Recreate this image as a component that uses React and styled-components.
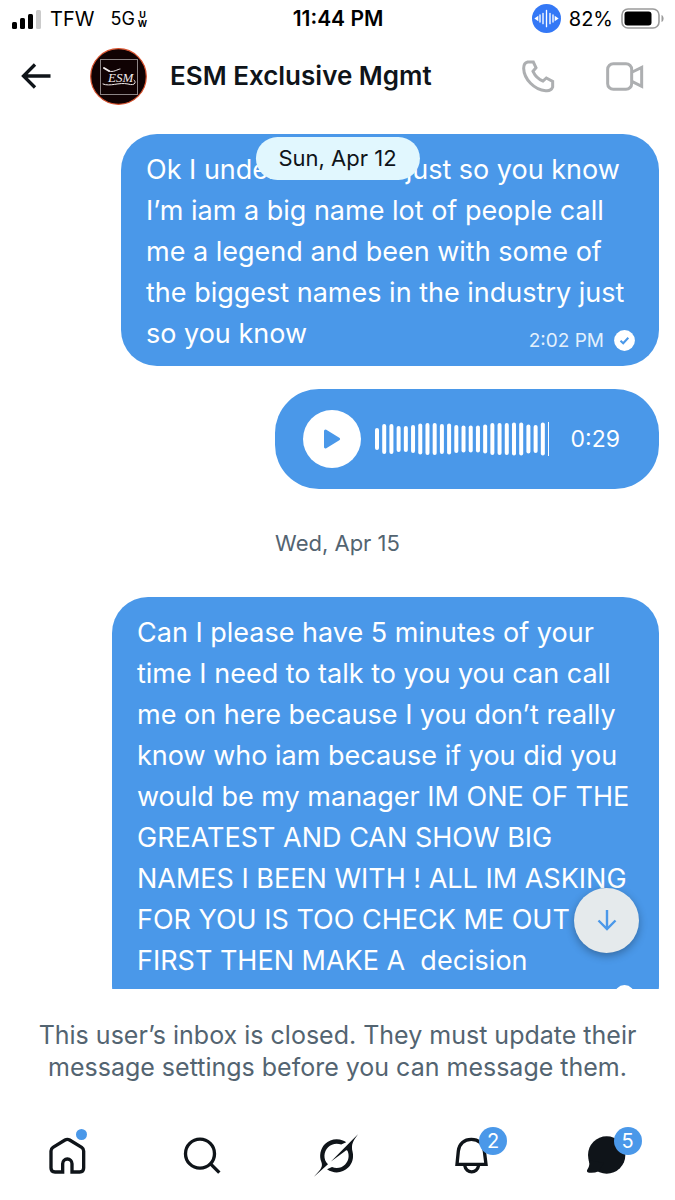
import React from 'react';
import styled, { createGlobalStyle } from 'styled-components';


const GlobalStyle = createGlobalStyle`
  * {
    box-sizing: border-box;
  }

  body {
    margin: 0;
    background-color: #fff;
    color: #0f1419;
    font-family: Inter, "Liberation Sans", sans-serif;
  }

  svg {
    display: block;
    flex-shrink: 0;
  }

  button {
    padding: 0;
    border: none;
    background: none;
    font: inherit;
    color: inherit;
    cursor: pointer;
  }
`;

const Screen = styled.div`
  display: flex;
  flex-direction: column;
  height: 100vh;
  overflow: hidden;
`;

const StatusBar = styled.div`
  display: grid;
  grid-template-columns: 1fr auto 1fr;
  align-items: center;
  height: 37px;
  padding: 0 11px 0 12px;
  color: #000;
  font-size: 20px;
  line-height: 24px;
`;

const StatusGroup = styled.div`
  display: flex;
  align-items: center;
  justify-content: ${(p) => (p.$end ? 'flex-end' : 'flex-start')};
  gap: 8px;
`;

const Clock = styled.time`
  font-size: 21px;
  font-weight: 600;
`;

const Network = styled.span`
  display: flex;
  align-items: center;
  gap: 3px;
  margin-left: 8px;
  font-size: 18px;
`;

const NetworkBand = styled.span`
  display: flex;
  flex-direction: column;
  font-size: 9px;
  font-weight: 700;
  line-height: 9px;
  text-align: center;
`;

const Header = styled.header`
  display: flex;
  align-items: center;
  height: 78px;
  padding: 0 31px 0 21px;
`;

const Avatar = styled.svg`
  margin: 0 23px 0 39px;
`;

const Title = styled.h1`
  flex: 1;
  margin: 0;
  font-size: 26px;
  font-weight: 600;
  line-height: 32px;
  white-space: nowrap;
`;

const Calls = styled.div`
  display: flex;
  align-items: center;
  gap: 50px;
  color: #adafb1;
`;

const ThreadArea = styled.main`
  position: relative;
  flex: 1;
  min-height: 0;
`;

const Thread = styled.div`
  display: flex;
  flex-direction: column;
  align-items: flex-end;
  gap: 23px;
  height: 100%;
  padding: 19px 16px 0;
  overflow: hidden;
`;

const DatePill = styled.div`
  position: absolute;
  top: 22px;
  left: 50%;
  padding: 0 23px;
  border-radius: 22px;
  transform: translateX(-50%);
  background-color: #e1f7fe;
  font-size: 22px;
  line-height: 43px;
  white-space: nowrap;
`;

const DateDivider = styled.div`
  align-self: center;
  flex-shrink: 0;
  padding: 16px 0;
  color: #536471;
  font-size: 22px;
  line-height: 30px;
`;

const Bubble = styled.article`
  display: flex;
  flex-direction: column;
  flex-shrink: 0;
  width: ${(p) => p.$width}px;
  max-width: 100%;
  padding: 15px 24px 15px 25px;
  border-radius: 36px;
  background-color: #4a98e9;
  color: #fff;
`;

const BubbleText = styled.p`
  margin: 0;
  font-size: 27px;
  line-height: 41px;
  white-space: pre-wrap;
`;

const Meta = styled.div`
  display: flex;
  align-items: center;
  align-self: flex-end;
  gap: 10px;
  margin-top: ${(p) => (p.$tucked ? '-24px' : '4px')};
  font-size: 19px;
  line-height: 20px;
  color: #e3f0fc;
`;

const VoiceBubble = styled.article`
  display: flex;
  align-items: center;
  flex-shrink: 0;
  height: 100px;
  padding: 0 39px 0 28px;
  border-radius: 44px;
  background-color: #4a98e9;
  color: #fff;
  font-size: 23px;
`;

const PlayButton = styled.button`
  display: grid;
  place-items: center;
  width: 58px;
  height: 58px;
  margin-right: 14px;
  border-radius: 50%;
  background-color: #fff;
`;

const Duration = styled.span`
  margin-left: 22px;
`;

const JumpButton = styled.button`
  position: absolute;
  right: 36px;
  bottom: 36px;
  display: grid;
  place-items: center;
  width: 65px;
  height: 65px;
  border-radius: 50%;
  background-color: #e5eaec;
  box-shadow: 0 3px 8px rgba(0, 0, 0, 0.3);
`;

const Notice = styled.p`
  margin: 0;
  padding: 30px 24px 27px;
  color: #536471;
  font-size: 25px;
  line-height: 32px;
  text-align: center;
`;

const Nav = styled.nav`
  display: grid;
  grid-template-columns: repeat(5, 1fr);
  place-items: center;
  height: 90px;
  padding-right: 2px;
`;

const NavLink = styled.a`
  position: relative;
  color: #0f1419;
  text-decoration: none;
`;

const Dot = styled.span`
  position: absolute;
  top: -4px;
  right: 2px;
  width: 11px;
  height: 11px;
  border-radius: 50%;
  background-color: #4a98e9;
`;

const Badge = styled.span`
  position: absolute;
  top: -6px;
  right: -14px;
  width: 28px;
  height: 28px;
  border-radius: 50%;
  background-color: #4a98e9;
  color: #fff;
  font-size: 20px;
  line-height: 28px;
  text-align: center;
`;

const levels = [22, 30, 30, 26, 26, 28, 31, 32, 32, 30, 31, 28, 27, 27, 27, 29, 32, 32, 32, 33, 33, 29, 28, 33];

const firstMessage = `Ok I understand but just so you know
I’m iam a big name lot of people call
me a legend and been with some of
the biggest names in the industry just
so you know`;

const secondMessage = `Can I please have 5 minutes of your
time I need to talk to you you can call
me on here because I you don’t really
know who iam because if you did you
would be my manager IM ONE OF THE
GREATEST AND CAN SHOW BIG
NAMES I BEEN WITH ! ALL IM ASKING
FOR YOU IS TOO CHECK ME OUT
FIRST THEN MAKE A  decision`;

const SignalIcon = () => (
  <svg width="30" height="20" viewBox="0 0 30 20">
    <rect x="0" y="13" width="5" height="7" rx="1.5" />
    <rect x="8" y="9" width="5" height="11" rx="1.5" />
    <rect x="16" y="5" width="5" height="15" rx="1.5" />
    <rect x="24" y="1" width="5" height="19" rx="1.5" fill="#cbcbcb" />
  </svg>
);

const VoiceIcon = () => (
  <svg width="29" height="29" viewBox="0 0 87 87">
    <circle cx="43.5" cy="43.5" r="43.5" fill="#3478f6" />
    <g stroke="#fff" strokeWidth="4" strokeLinecap="round">
      <path d="M24 33V54M33 28V59M43.5 19V68M54 28V59M63 33V54" />
    </g>
    <path d="M19 35V52L7 43.5ZM68 35V52L80 43.5Z" fill="#fff" />
  </svg>
);

const BatteryIcon = () => (
  <svg width="43" height="21" viewBox="0 0 43 21">
    <rect x="1" y="1" width="37" height="19" rx="6" fill="none" stroke="#9b9b9b" strokeWidth="1.6" />
    <rect x="3.5" y="3.5" width="27" height="14" rx="3" />
    <path d="M40.5 7C43.3 8 43.3 13 40.5 14Z" fill="#9b9b9b" />
  </svg>
);

const AvatarImage = () => (
  <Avatar width="57" height="57" viewBox="0 0 57 57" role="img" aria-label="ESM Exclusive Mgmt">
    <circle cx="28.5" cy="28.5" r="27.8" fill="#100203" stroke="#d9532f" strokeWidth="1.2" />
    <rect x="10.500" y="11.500" width="37" height="35" fill="none" stroke="#8c8485" strokeWidth="1" />
    <g fill="none" stroke="#f3eded" strokeLinecap="round">
      <path d="M14 20L19 23" strokeWidth="2" />
      <path d="M19 23C23 25 28 21 30 21M13 36C20 39 29 34 38 36C44 38 47 35 44 32" strokeWidth="1" />
    </g>
    <text x="18" y="34" fill="#f3eded" fontFamily="Liberation Serif, serif" fontStyle="italic" fontSize="13">ESM</text>
  </Avatar>
);

const Check = () => (
  <svg width="21" height="21" viewBox="0 0 21 21">
    <circle cx="10.5" cy="10.5" r="10.4" fill="#fff" />
    <path d="M6.500 10.800L9.200 13.300L14.300 7.800" fill="none" stroke="#4a98e9" strokeWidth="2" />
  </svg>
);

const Waveform = () => (
  <svg width="174" height="36" viewBox="0 0 174 36" fill="#fff">
    {levels.map((h, i) => (
      <rect key={i} x={i * 7.21} y={18 - h / 2} width="4" height={h} rx="2" />
    ))}
    <rect x="173" y="1" width="1" height="34" />
  </svg>
);

const App = () => {
    return (
        <Screen>
            <GlobalStyle />
            <StatusBar>
                <StatusGroup>
                    <SignalIcon />
                    <span>TFW</span>
                    <Network>
                        5G
                        <NetworkBand>
                            <span>U</span>
                            <span>W</span>
                        </NetworkBand>
                    </Network>
                </StatusGroup>
                <Clock>11:44 PM</Clock>
                <StatusGroup $end>
                    <VoiceIcon />
                    <span>82%</span>
                    <BatteryIcon />
                </StatusGroup>
            </StatusBar>

            <Header>
                <button aria-label="Back">
                    <svg width="30" height="26" viewBox="0 0 30 26" fill="none" stroke="#0f1419" strokeWidth="3.3">
                        <path d="M14 1.500L2.500 13L14 24.500M2.500 13H29.500" />
                    </svg>
                </button>
                <AvatarImage />
                <Title>ESM Exclusive Mgmt</Title>
                <Calls>
                    <button aria-label="Voice call">
                        <svg width="34" height="34" viewBox="0 0 102 102" fill="none" stroke="currentColor" strokeWidth="9">
                            <path d="M20 9H37L45 26L36 37C42 50 53 61 66 66L76 57L95 67V84Q90 97 74 95C40 93 9 60 8 28Q8 12 20 9Z" />
                        </svg>
                    </button>
                    <button aria-label="Video call">
                        <svg width="39" height="31" viewBox="0 0 117 93" fill="none" stroke="currentColor" strokeWidth="9">
                            <rect x="8" y="8" width="72" height="77" rx="17" />
                            <path d="M82 33L110 19V76L82 62" />
                        </svg>
                    </button>
                </Calls>
            </Header>

            <ThreadArea>
                <Thread>
                    <Bubble $width={538}>
                        <BubbleText>{firstMessage}</BubbleText>
                        <Meta $tucked>
                            2:02 PM
                            <Check />
                        </Meta>
                    </Bubble>
                    <VoiceBubble>
                        <PlayButton aria-label="Play voice message">
                            <svg width="18" height="20" viewBox="0 0 18 20">
                                <path d="M2.500 2L15.500 10L2.500 18Z" fill="#4a98e9" stroke="#4a98e9" strokeWidth="3" strokeLinejoin="round" />
                            </svg>
                        </PlayButton>
                        <Waveform />
                        <Duration>0:29</Duration>
                    </VoiceBubble>
                    <DateDivider>Wed, Apr 15</DateDivider>
                    <Bubble $width={547}>
                        <BubbleText>{secondMessage}</BubbleText>
                        <Meta>
                            <Check />
                        </Meta>
                    </Bubble>
                </Thread>
                <DatePill>Sun, Apr 12</DatePill>
                <JumpButton aria-label="Jump to latest">
                    <svg width="20" height="21" viewBox="0 0 20 21" fill="none" stroke="#4a98e9" strokeWidth="2.4">
                        <path d="M10 0V19M1.500 10.500L10 19L18.500 10.500" />
                    </svg>
                </JumpButton>
            </ThreadArea>

            <Notice>
                This user’s inbox is closed. They must update their message settings before you can message them.
            </Notice>

            <Nav>
                <NavLink href="#home" aria-label="Home">
                    <svg width="44" height="44" viewBox="0 0 132 132" fill="none" stroke="currentColor" strokeWidth="10">
                        <path d="M53 117H30Q18 117 18 105V54Q18 47 24 43L60 21Q67 17 74 21L110 43Q116 47 116 54V105Q116 117 104 117H81V92A14 14 0 0 0 53 92Z" />
                    </svg>
                    <Dot />
                </NavLink>
                <NavLink href="#search" aria-label="Search">
                    <svg width="44" height="44" viewBox="0 0 132 132" fill="none" stroke="currentColor" strokeWidth="10">
                        <circle cx="60" cy="62" r="43.500" />
                        <path d="M91 92L118 119" />
                    </svg>
                </NavLink>
                <NavLink href="#grok" aria-label="Grok">
                    <svg width="44" height="43" viewBox="0 0 33 32" fill="currentColor">
                        <path d="M12.745 20.540l10.970-8.190c.539-.4 1.307-.244 1.564.38 1.349 3.288.746 7.241-1.938 9.955-2.683 2.714-6.417 3.310-9.830 1.954l-3.728 1.745c5.347 3.697 11.840 2.782 15.898-1.324 3.219-3.255 4.216-7.692 3.284-11.693l.008.009c-1.351-5.878.332-8.227 3.782-13.031L33 0l-4.540 4.590v-.014L12.743 20.544m-2.263 1.987c-3.837-3.707-3.175-9.446.1-12.755 2.420-2.449 6.388-3.448 9.852-1.979l3.720-1.737c-.67-.49-1.530-1.017-2.515-1.387-4.455-1.854-9.789-.931-13.410 2.728-3.483 3.523-4.579 8.940-2.697 13.561 1.405 3.454-.899 5.898-3.220 8.364C1.490 30.200.666 31.074 0 32l10.478-9.466" />
                    </svg>
                </NavLink>
                <NavLink href="#notifications" aria-label="Notifications">
                    <svg width="44" height="44" viewBox="0 0 132 132" fill="none" stroke="currentColor" strokeWidth="10">
                        <path d="M24 94L28 54C30 32 46 19 67 19S104 32 106 54L111 94Z" />
                        <path d="M47 97C51 123 85 123 89 97" />
                    </svg>
                    <Badge>2</Badge>
                </NavLink>
                <NavLink href="#messages" aria-label="Messages">
                    <svg width="44" height="44" viewBox="0 0 132 132" fill="currentColor">
                        <circle cx="68" cy="66" r="56" />
                        <path d="M14 82Q19 97 11 108Q5 117 15 119Q30 121 44 115L60 90Z" />
                    </svg>
                    <Badge>5</Badge>
                </NavLink>
            </Nav>
        </Screen>
    );
};

export default App;
